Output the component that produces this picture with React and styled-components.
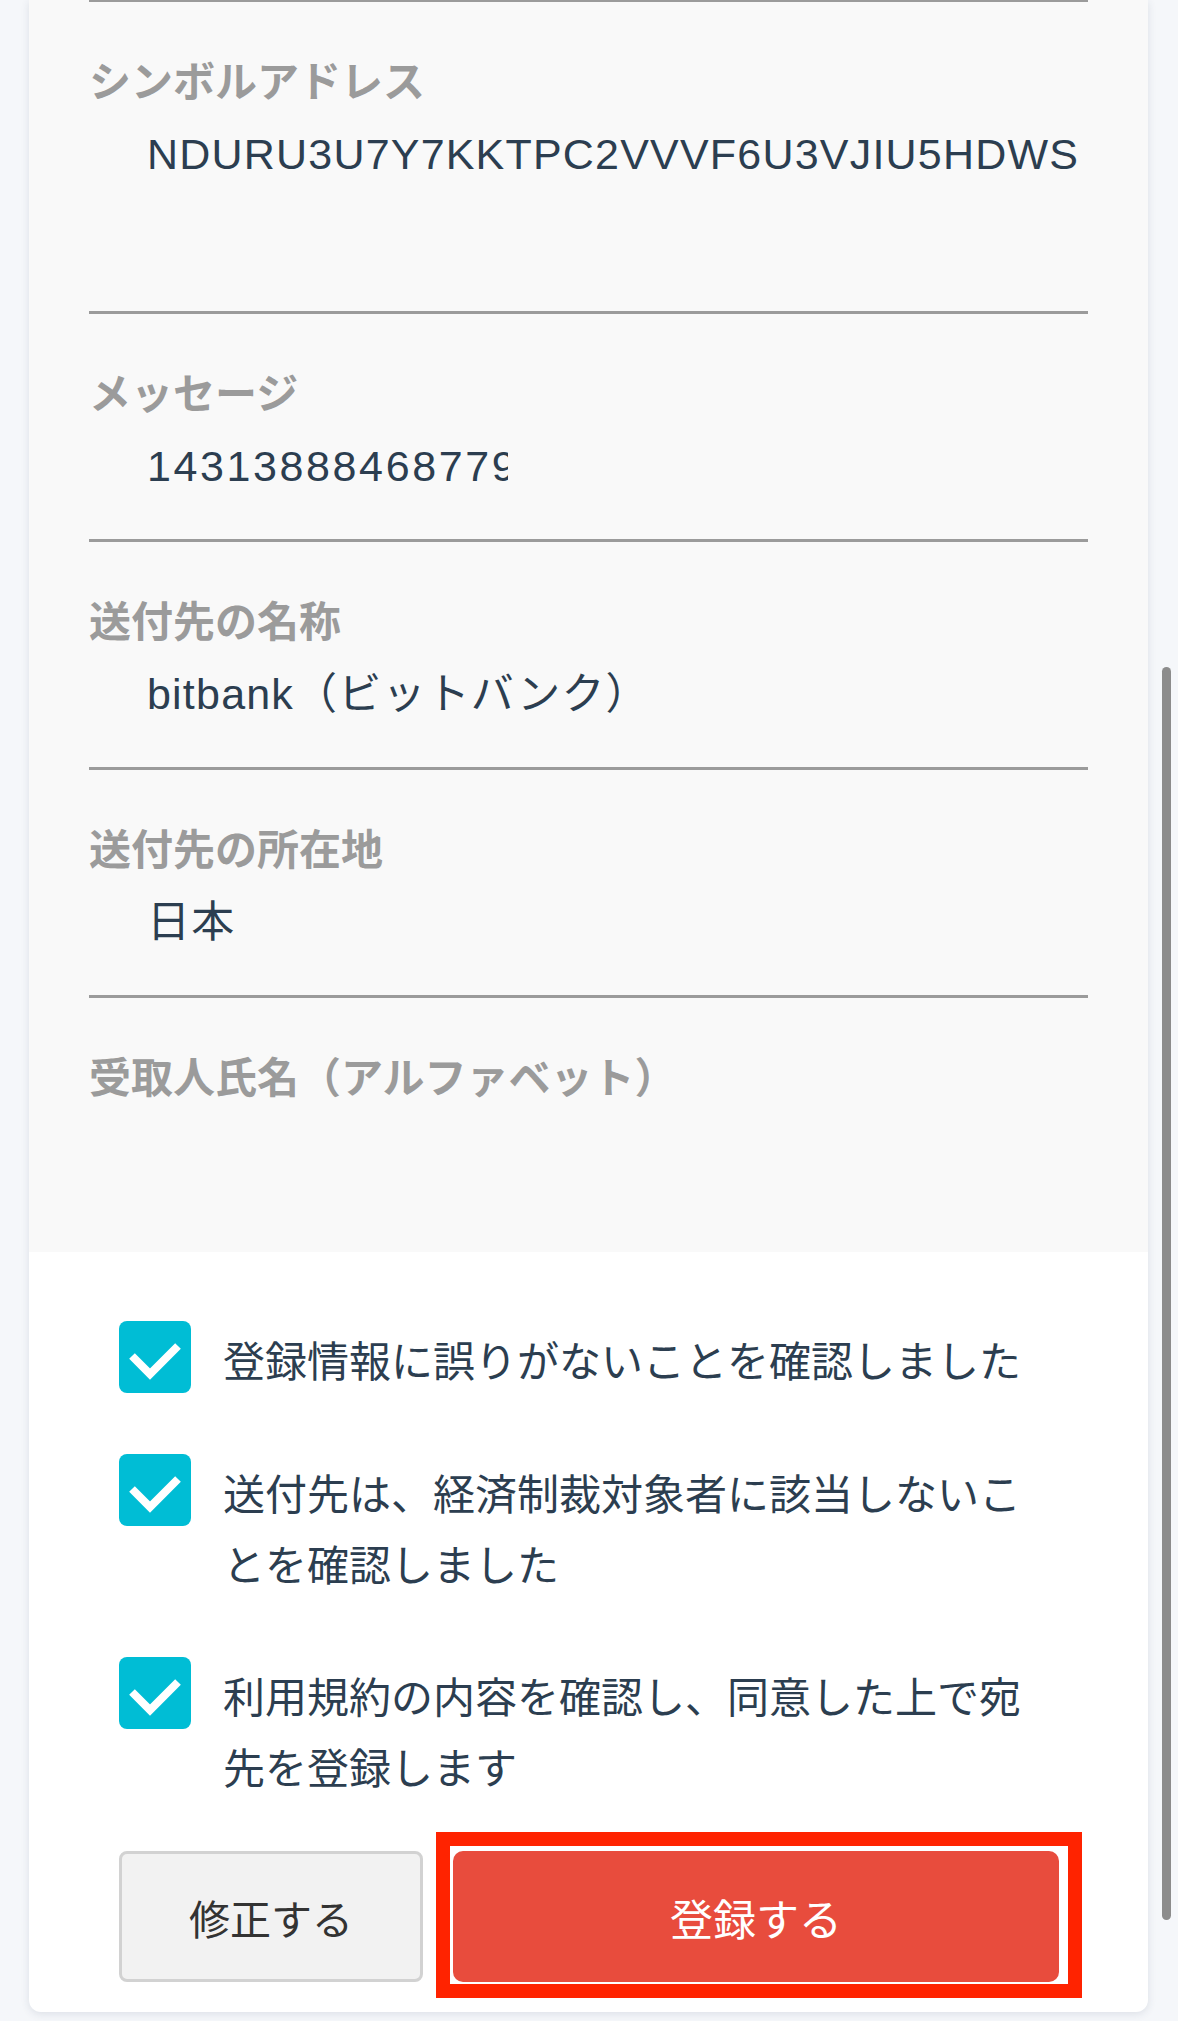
import React from 'react';
import styled, { createGlobalStyle } from 'styled-components';

const GlobalStyle = createGlobalStyle`
  html, body {
    margin: 0;
    padding: 0;
    background: #f5f7fa;
  }
  body {
    font-family: "Noto Sans CJK JP", "Noto Sans", sans-serif;
    color: #2c3e50;
  }
`;

const Page = styled.div`
  position: relative;
  width: 1178px;
  min-height: 2021px;
  padding-bottom: 8px;
  box-sizing: border-box;
  overflow: hidden;
`;

const Card = styled.div`
  margin-left: 29px;
  width: 1119px;
  background: #ffffff;
  border-radius: 0 0 12px 12px;
  box-shadow: 0 2px 8px rgba(40, 60, 90, 0.12);
  overflow: hidden;
`;

const Details = styled.div`
  background: #f9f9f9;
  padding: 0 60px 29px;
`;

const TopRule = styled.div`
  height: 2px;
  background: #9b9b9b;
`;

const Field = styled.div`
  padding: 49px 0 28px;
  border-bottom: ${(p) => (p.$last ? 'none' : '3px solid #9b9b9b')};
`;

const Label = styled.div`
  font-family: "Noto Sans CJK JP", sans-serif;
  font-size: 42px;
  font-weight: 700;
  line-height: 56px;
  margin-bottom: 2px;
  color: #9b9b9b;
  white-space: nowrap;
`;

const Value = styled.div`
  height: ${(p) => (p.$tall ? '174px' : '90px')};
  padding-left: 58px;
  font-family: "Liberation Sans", "Noto Sans CJK JP", sans-serif;
  font-size: 43px;
  letter-spacing: 1.2px;
  line-height: 90px;
  color: #2c3e50;
  white-space: nowrap;
`;

const Clip = styled.span`
  display: inline-block;
  max-width: ${(p) => p.$width}px;
  overflow: hidden;
  vertical-align: top;
  letter-spacing: 2.6px;
`;

const Confirm = styled.div`
  padding: 69px 89px 30px 90px;
`;

const CheckList = styled.div`
  display: flex;
  flex-direction: column;
  gap: 61px;
`;

const CheckRow = styled.label`
  display: flex;
  align-items: flex-start;
  gap: 32px;
`;

const Box = styled.span`
  flex: 0 0 72px;
  width: 72px;
  height: 72px;
  border-radius: 8px;
  background: #00bdd5;
  display: flex;
  align-items: center;
  justify-content: center;
`;

const CheckText = styled.span`
  flex: 1;
  font-family: "Noto Sans CJK JP", sans-serif;
  font-size: 42px;
  line-height: 71px;
  margin-top: 2px;
  margin-bottom: -2px;
  color: #2c3e50;
  line-break: strict;
`;

const Buttons = styled.div`
  display: flex;
  gap: 30px;
  margin-top: 52px;
`;

const Button = styled.button`
  height: 131px;
  border-radius: 8px;
  font-family: "Noto Sans CJK JP", sans-serif;
  font-size: 41px;
  cursor: pointer;
  padding: 0;
`;

const EditButton = styled(Button)`
  flex: 0 0 304px;
  background: #f2f2f2;
  border: 3px solid #d2d2d2;
  color: #333333;
`;

const Highlight = styled.div`
  position: relative;
  flex: 1;
  display: flex;

  &::after {
    content: '';
    position: absolute;
    left: -17px;
    top: -19px;
    right: -23px;
    bottom: -16px;
    border: 14px solid #ff2300;
    pointer-events: none;
  }
`;

const SubmitButton = styled(Button)`
  flex: 1;
  background: #e84c3d;
  border: none;
  border-radius: 10px;
  color: #ffffff;
  font-size: 43px;
`;

const ScrollThumb = styled.div`
  position: absolute;
  right: 7px;
  top: 667px;
  width: 9px;
  height: 1253px;
  border-radius: 5px;
  background: #8c8c8c;
`;

const Check = () => (
  <svg width="72" height="72" viewBox="0 0 72 72">
    <polyline
      points="13,35 31,53 59,25"
      fill="none"
      stroke="#ffffff"
      strokeWidth="8"
      strokeLinejoin="miter"
    />
  </svg>
);

const checks = [
  '登録情報に誤りがないことを確認しました',
  '送付先は、経済制裁対象者に該当しないことを確認しました',
  '利用規約の内容を確認し、同意した上で宛先を登録します',
];

const App = () => (
  <Page>
    <GlobalStyle />
    <Card>
      <Details>
        <TopRule />
        <Field>
          <Label>シンボルアドレス</Label>
          <Value $tall>NDURU3U7Y7KKTPC2VVVF6U3VJIU5HDWS</Value>
        </Field>
        <Field>
          <Label>メッセージ</Label>
          <Value>
            <Clip $width={361}>14313888468779</Clip>
          </Value>
        </Field>
        <Field>
          <Label>送付先の名称</Label>
          <Value>bitbank（ビットバンク）</Value>
        </Field>
        <Field>
          <Label>送付先の所在地</Label>
          <Value>日本</Value>
        </Field>
        <Field $last>
          <Label>受取人氏名（アルファベット）</Label>
          <Value />
        </Field>
      </Details>
      <Confirm>
        <CheckList>
          {checks.map((text) => (
            <CheckRow key={text}>
              <Box>
                <Check />
              </Box>
              <CheckText>{text}</CheckText>
            </CheckRow>
          ))}
        </CheckList>
        <Buttons>
          <EditButton>修正する</EditButton>
          <Highlight>
            <SubmitButton>登録する</SubmitButton>
          </Highlight>
        </Buttons>
      </Confirm>
    </Card>
    <ScrollThumb />
  </Page>
);

export default App;
